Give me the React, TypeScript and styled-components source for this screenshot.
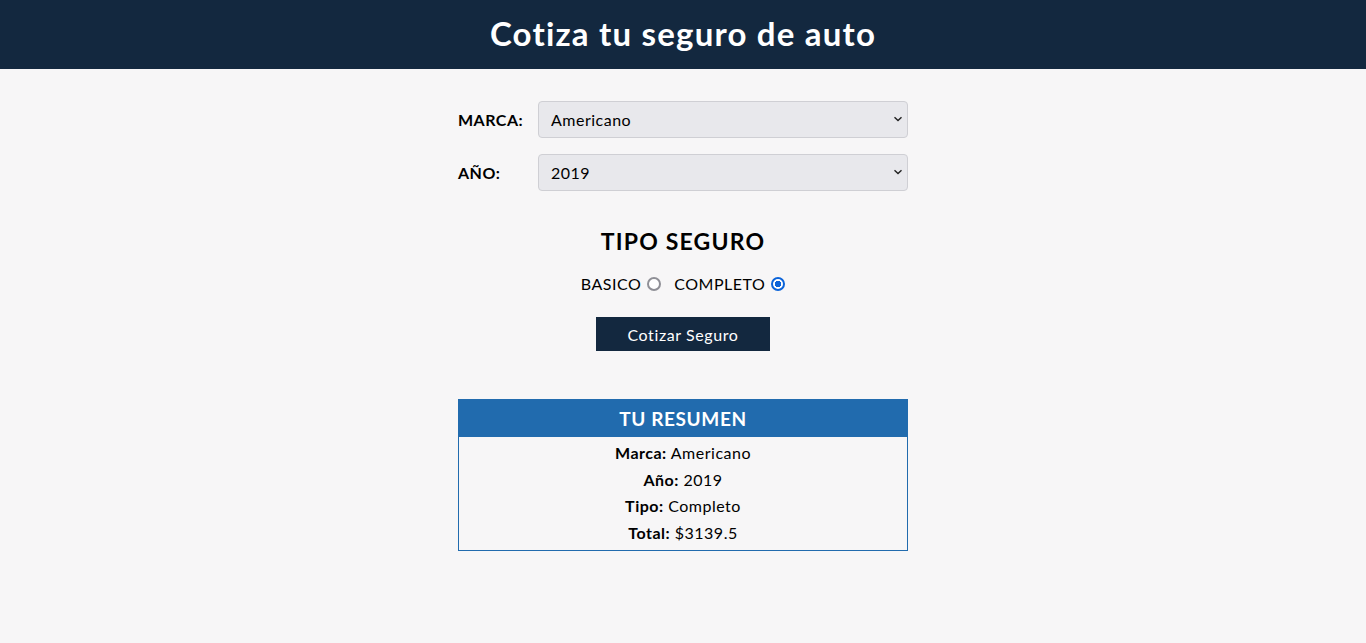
import React, { useState } from 'react'
import styled, { createGlobalStyle } from 'styled-components'

const GlobalStyle = createGlobalStyle`
    * { box-sizing: border-box; }
    body {
        margin: 0;
        background: #f7f6f7;
        font-family: Lato, 'Open Sans', sans-serif;
        letter-spacing: 0.5px;
        color: #000;
    }
`

const Chevron = () => (
    <svg width="10" height="6" viewBox="0 0 10 6">
        <path d="M1.5 1.2 L5 4.6 L8.5 1.2" fill="none" stroke="#222" strokeWidth="1.4" />
    </svg>
)

const App = () => {
    const [marca, setMarca] = useState('americano')
    const [year, setYear] = useState('2019')
    const [plan, setPlan] = useState('completo')

    return (
        <>
            <GlobalStyle />
            <Header>
                <Title>Cotiza tu seguro de auto</Title>
            </Header>
            <Main>
                <Field>
                    <Label>MARCA:</Label>
                    <SelectWrap>
                        <Select value={marca} onChange={e => setMarca(e.target.value)}>
                            <option value="americano">Americano</option>
                            <option value="europeo">Europeo</option>
                            <option value="asiatico">Asiatico</option>
                        </Select>
                        <Arrow><Chevron /></Arrow>
                    </SelectWrap>
                </Field>
                <Field>
                    <Label>AÑO:</Label>
                    <SelectWrap>
                        <Select value={year} onChange={e => setYear(e.target.value)}>
                            {['2021', '2020', '2019', '2018', '2017'].map(y => (
                                <option key={y} value={y}>{y}</option>
                            ))}
                        </Select>
                        <Arrow><Chevron /></Arrow>
                    </SelectWrap>
                </Field>

                <SubTitle>TIPO SEGURO</SubTitle>
                <Radios>
                    <RadioLabel>
                        BASICO
                        <Radio type="radio" name="plan" value="basico" checked={plan === 'basico'} onChange={() => setPlan('basico')} />
                    </RadioLabel>
                    <RadioLabel>
                        COMPLETO
                        <Radio type="radio" name="plan" value="completo" checked={plan === 'completo'} onChange={() => setPlan('completo')} />
                    </RadioLabel>
                </Radios>

                <Button type="button">Cotizar Seguro</Button>

                <Summary>
                    <SummaryHead>TU RESUMEN</SummaryHead>
                    <SummaryBody>
                        <Line><b>Marca:</b> Americano</Line>
                        <Line><b>Año:</b> 2019</Line>
                        <Line><b>Tipo:</b> Completo</Line>
                        <Line><b>Total:</b> $3139.5</Line>
                    </SummaryBody>
                </Summary>
            </Main>
        </>
    )
}

const Header = styled.header`
    background: #13283f;
    height: 69px;
    display: flex;
    align-items: center;
    justify-content: center;
    padding-bottom: 4px;
`

const Title = styled.h1`
    margin: 0;
    color: #fff;
    font-size: 33px;
    font-weight: 700;
    letter-spacing: 1.2px;
`

const Main = styled.main`
    width: 450px;
    margin: 0 auto;
    padding-top: 32px;
    display: flex;
    flex-direction: column;
`

const Field = styled.div`
    display: flex;
    align-items: center;
    margin-bottom: 16px;
`

const Label = styled.label`
    width: 80px;
    font-size: 16px;
    font-weight: 700;
`

const SelectWrap = styled.div`
    flex: 1;
    position: relative;
    display: flex;
`

const Select = styled.select`
    flex: 1;
    appearance: none;
    height: 37px;
    padding: 0 12px;
    font-family: inherit;
    font-size: 16px;
    letter-spacing: 0.5px;
    color: #000;
    background: #e8e8ec;
    border: 1px solid #cfcfd4;
    border-radius: 4px;
`

const Arrow = styled.span`
    position: absolute;
    right: 5px;
    top: 15px;
    display: flex;
    pointer-events: none;
`

const SubTitle = styled.h2`
    margin: 22px 0 0;
    text-align: center;
    font-size: 23px;
    font-weight: 700;
    letter-spacing: 1.2px;
    line-height: 1.1;
`

const Radios = styled.div`
    display: flex;
    justify-content: center;
    gap: 13px;
    margin-top: 20px;
`

const RadioLabel = styled.label`
    display: flex;
    align-items: center;
    font-size: 16px;
`

const Radio = styled.input`
    appearance: none;
    margin: 0 0 0 6px;
    width: 14px;
    height: 14px;
    border-radius: 50%;
    border: 2px solid #8f8f96;
    background: #fff;

    &:checked {
        border-color: #0b63d9;
        background: radial-gradient(circle, #0b63d9 0 3px, #fff 3.4px);
    }
`

const Button = styled.button`
    align-self: center;
    margin-top: 24px;
    width: 174px;
    height: 34px;
    background: #13283f;
    color: #fff;
    border: none;
    font-family: inherit;
    font-size: 16px;
    letter-spacing: 0.6px;
    cursor: pointer;
`

const Summary = styled.section`
    margin-top: 48px;
    border: 1px solid #216bae;
`

const SummaryHead = styled.h3`
    margin: 0;
    height: 37px;
    display: flex;
    align-items: center;
    justify-content: center;
    background: #216bae;
    color: #fff;
    font-size: 19px;
    font-weight: 700;
    letter-spacing: 0.6px;
`

const SummaryBody = styled.div`
    padding: 3px 0 3px;
    text-align: center;
`

const Line = styled.p`
    margin: 0;
    font-size: 16px;
    line-height: 26.6px;
`

export default App
